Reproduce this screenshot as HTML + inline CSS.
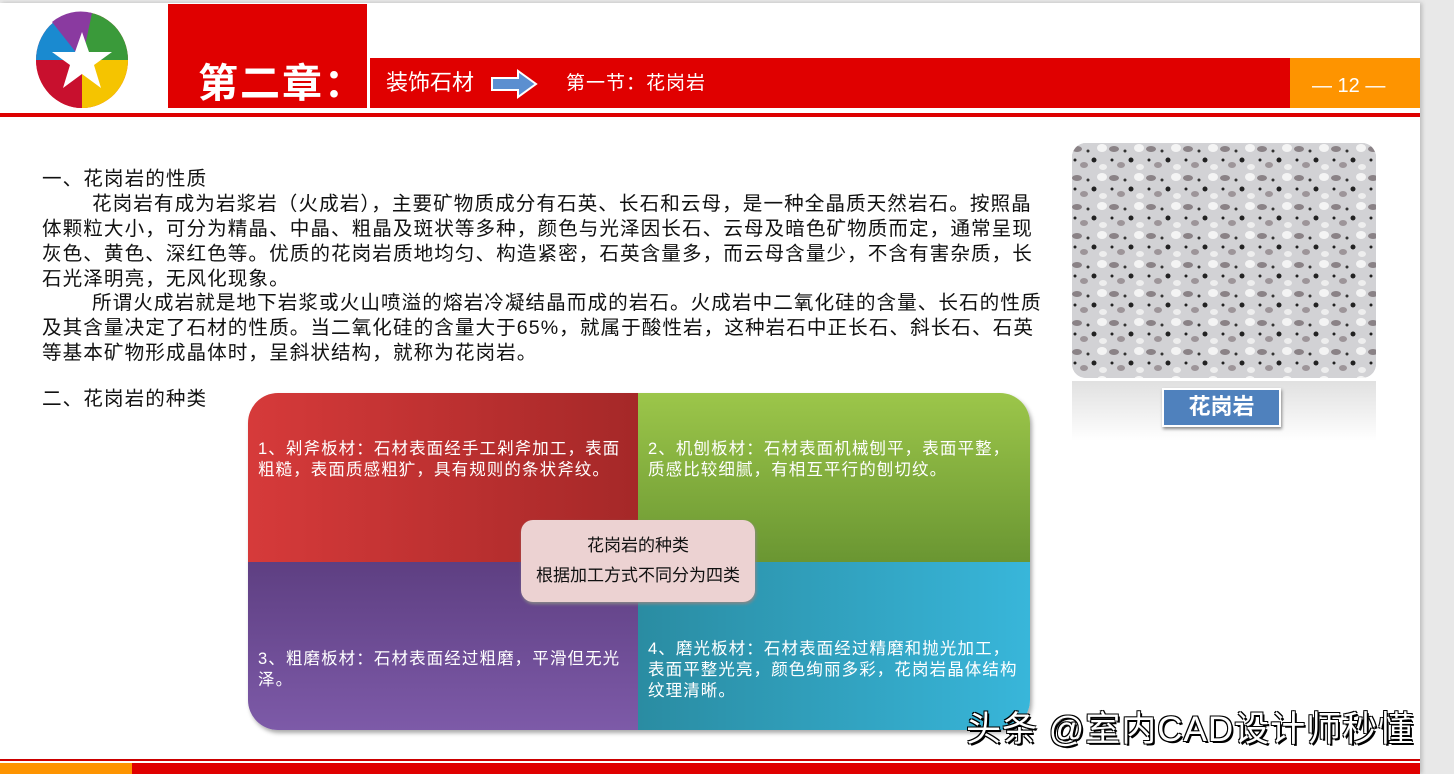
<!DOCTYPE html>
<html><head><meta charset="utf-8"><style>
*{margin:0;padding:0;box-sizing:border-box}
body{width:1454px;height:774px;background:#e8e8e8;position:relative;overflow:hidden;font-family:"Liberation Sans","Noto Sans CJK SC",sans-serif}
.slide{position:absolute;left:0;top:3px;width:1420px;height:771px;background:#fff;box-shadow:2px 0 4px #bbb}
.a{position:absolute}
.t{position:absolute;font-size:19.6px;color:#111;white-space:nowrap;line-height:25px;letter-spacing:1.05px}
.q{position:absolute;color:#fff;font-size:16.5px;line-height:21px;letter-spacing:1.1px}
</style></head><body>
<div class="slide">
<svg class="a" style="left:34px;top:7px" width="96" height="100" viewBox="0 0 96 100">
<ellipse cx="48" cy="50" rx="46" ry="48" fill="#e23"/>
<path d="M48 2 A46 48 0 0 1 94 50 L48 50Z" fill="#3a9a3a"/>
<path d="M94 50 A46 48 0 0 1 48 98 L48 50Z" fill="#f5c400"/>
<path d="M48 98 A46 48 0 0 1 2 50 L48 50Z" fill="#c8102e"/>
<path d="M2 50 A46 48 0 0 1 48 2 L48 50Z" fill="#1a8ad0"/>
<path d="M18 12 A46 48 0 0 1 58 3 L48 50Z" fill="#8a3aa0"/>
<polygon points="48,22 55,42 78,42 60,55 67,78 48,64 29,78 36,55 18,42 41,42" fill="#fff"/>
</svg>
<div class="a" style="left:168px;top:1px;width:199px;height:104px;background:#e00000"></div>
<div class="a" style="left:198px;top:52px;color:#fff;font-size:40px;font-weight:bold;letter-spacing:2px;font-family:'Noto Sans CJK SC',sans-serif;line-height:50px">第二章：</div>
<div class="a" style="left:370px;top:55px;width:920px;height:50px;background:#e00000"></div>
<div class="a" style="left:1290px;top:55px;width:130px;height:50px;background:#fe9400"></div>
<div class="a" style="left:386px;top:66px;color:#fff;font-size:22px;line-height:28px">装饰石材</div>
<svg class="a" style="left:490px;top:66px" width="48" height="30"><polygon points="2,9 28,9 28,2 46,15 28,28 28,21 2,21" fill="#5b8fd0" stroke="#fff" stroke-width="2"/></svg>
<div class="a" style="left:566px;top:68px;color:#fff;font-size:19px;line-height:26px;letter-spacing:1px">第一节：花岗岩</div>
<div class="a" style="left:1312px;top:70px;color:#fff;font-size:20px;line-height:26px">— 12 —</div>
<div class="a" style="left:0;top:110px;width:1420px;height:4px;background:#d00"></div>

<div class="t" style="left:42px;top:164px">一、花岗岩的性质</div>
<div class="t" style="left:92px;top:189px">花岗岩有成为岩浆岩（火成岩），主要矿物质成分有石英、长石和云母，是一种全晶质天然岩石。按照晶</div>
<div class="t" style="left:42px;top:214px">体颗粒大小，可分为精晶、中晶、粗晶及斑状等多种，颜色与光泽因长石、云母及暗色矿物质而定，通常呈现</div>
<div class="t" style="left:42px;top:239px">灰色、黄色、深红色等。优质的花岗岩质地均匀、构造紧密，石英含量多，而云母含量少，不含有害杂质，长</div>
<div class="t" style="left:42px;top:264px">石光泽明亮，无风化现象。</div>
<div class="t" style="left:92px;top:288px">所谓火成岩就是地下岩浆或火山喷溢的熔岩冷凝结晶而成的岩石。火成岩中二氧化硅的含量、长石的性质</div>
<div class="t" style="left:42px;top:313px">及其含量决定了石材的性质。当二氧化硅的含量大于65%，就属于酸性岩，这种岩石中正长石、斜长石、石英</div>
<div class="t" style="left:42px;top:338px">等基本矿物形成晶体时，呈斜状结构，就称为花岗岩。</div>
<div class="t" style="left:42px;top:384px">二、花岗岩的种类</div>

<div class="a" style="left:1072px;top:140px;width:304px;height:235px;border-radius:14px;overflow:hidden;background:#c9c9cc">
<svg width="304" height="235">
<defs><pattern id="g" width="37" height="29" patternUnits="userSpaceOnUse">
<rect width="37" height="29" fill="#d2d2d5"/><ellipse cx="5" cy="6" rx="5" ry="3" fill="#8a8286"/><circle cx="22" cy="17" r="2.5" fill="#222"/><ellipse cx="30" cy="5" rx="5" ry="4" fill="#f4f4f4"/><ellipse cx="12" cy="22" rx="4" ry="3" fill="#9d9599"/><circle cx="16" cy="8" r="1.5" fill="#333"/><ellipse cx="31" cy="24" rx="4" ry="3" fill="#eee"/><circle cx="3" cy="17" r="1.5" fill="#222"/></pattern></defs>
<rect width="304" height="235" fill="url(#g)"/></svg></div>
<div class="a" style="left:1072px;top:378px;width:304px;height:60px;background:linear-gradient(#ccc,#fff);opacity:.6"></div>
<div class="a" style="left:1162px;top:385px;width:119px;height:39px;background:#4f81bd;border:2px solid #fff;box-shadow:1px 2px 3px #888;color:#fff;font-size:22px;font-weight:bold;text-align:center;line-height:34px">花岗岩</div>

<div class="a" style="left:248px;top:390px;width:782px;height:337px;border-radius:30px;overflow:hidden;box-shadow:2px 3px 4px #aaa">
<div class="a" style="left:0;top:0;width:390px;height:169px;background:linear-gradient(90deg,#d63a3a,#a52828)"></div>
<div class="a" style="left:390px;top:0;width:392px;height:169px;background:linear-gradient(#9cc64a,#6a9632)"></div>
<div class="a" style="left:0;top:169px;width:390px;height:168px;background:linear-gradient(#5e3f82,#7d5aa8)"></div>
<div class="a" style="left:390px;top:169px;width:392px;height:168px;background:linear-gradient(90deg,#2a8ca2,#38b6da)"></div>
<div class="q" style="left:10px;top:46px;width:372px">1、剁斧板材：石材表面经手工剁斧加工，表面粗糙，表面质感粗犷，具有规则的条状斧纹。</div>
<div class="q" style="left:400px;top:46px;width:372px">2、机刨板材：石材表面机械刨平，表面平整，质感比较细腻，有相互平行的刨切纹。</div>
<div class="q" style="left:10px;top:256px;width:372px">3、粗磨板材：石材表面经过粗磨，平滑但无光泽。</div>
<div class="q" style="left:400px;top:246px;width:372px">4、磨光板材：石材表面经过精磨和抛光加工，表面平整光亮，颜色绚丽多彩，花岗岩晶体结构纹理清晰。</div>
</div>
<div class="a" style="left:521px;top:517px;width:234px;height:82px;background:#ecd2d2;border-radius:12px;box-shadow:1px 2px 3px #888;text-align:center;font-size:17px;line-height:30px;padding-top:11px;color:#111">花岗岩的种类<br>根据加工方式不同分为四类</div>

<div class="a" style="left:966px;top:706px;font-size:35px;letter-spacing:1px;color:#fff;line-height:42px;text-shadow:2px 2px 0 #000,-1px -1px 0 #000,1px -1px 0 #000,-1px 1px 0 #000;white-space:nowrap">头条 @室内CAD设计师秒懂</div>

<div class="a" style="left:0;top:756px;width:1420px;height:2px;background:#c00"></div>
<div class="a" style="left:0;top:760px;width:132px;height:11px;background:#fe9400"></div>
<div class="a" style="left:132px;top:760px;width:1288px;height:11px;background:#e00000"></div>
</div>
</body></html>
